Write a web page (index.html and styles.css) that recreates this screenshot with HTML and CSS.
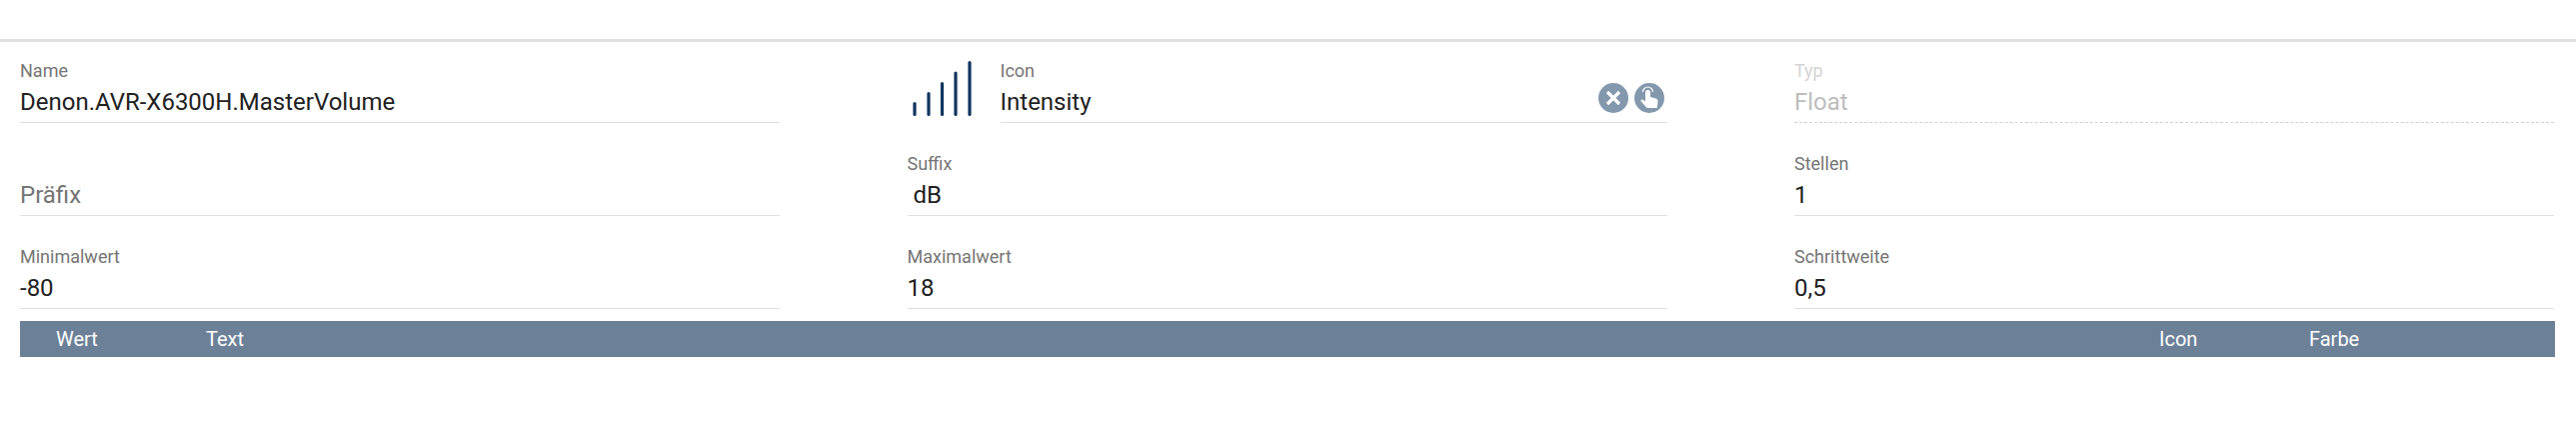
FILE: index.html
```html
<!DOCTYPE html>
<html lang="en">
<head>
<meta charset="UTF-8">
<meta name="viewport" content="width=device-width, initial-scale=1.0">
<title>Variable</title>
<link rel="stylesheet" href="styles.css">
</head>
<body>

<div class="toolbar"></div>

<div class="form">
  <div class="field">
    <label>Name</label>
    <div class="value">Denon.AVR-X6300H.MasterVolume</div>
  </div>

  <div class="field-icon">
    <svg class="preview" width="93" height="60" viewBox="0 0 93 60">
      <g stroke="#12355f" stroke-width="3.2" stroke-linecap="round">
        <line x1="7" y1="43.500" x2="7" y2="54.500"/>
        <line x1="21" y1="33.500" x2="21" y2="54.500"/>
        <line x1="34.500" y1="23.500" x2="34.500" y2="54.500"/>
        <line x1="48" y1="13" x2="48" y2="54.500"/>
        <line x1="62" y1="2.500" x2="62" y2="54.500"/>
      </g>
    </svg>
    <div class="field">
      <label>Icon</label>
      <div class="value">Intensity</div>
      <div class="actions">
        <svg width="30" height="30" viewBox="0 0 30 30">
          <circle cx="15" cy="15" r="15" fill="#8398ad"/>
          <path d="M9 9l12 12M21 9L9 21" stroke="#fff" stroke-width="3.2" fill="none"/>
        </svg>
        <svg width="30" height="30" viewBox="0 0 30 30">
          <circle cx="15" cy="15" r="15" fill="#8398ad"/>
          <path d="M8.500 9a5 5 0 0 1 10 0" stroke="#fff" stroke-width="1.200" fill="none"/>
          <path d="M11 9.500a2.500 2.500 0 0 1 5 0v4.500l5.500 1.500c1.500.4 2.200 1.600 2 3l-.8 6.500h-10l-6-6.500c-.9-1.300.7-2.700 2-1.700l2.300 1.700z" fill="#fff"/>
        </svg>
      </div>
    </div>
  </div>

  <div class="field disabled">
    <label>Typ</label>
    <div class="value">Float</div>
  </div>

  <div class="field">
    <div class="value placeholder">Präfix</div>
  </div>
  <div class="field">
    <label>Suffix</label>
    <div class="value">&nbsp;dB</div>
  </div>
  <div class="field">
    <label>Stellen</label>
    <div class="value">1</div>
  </div>

  <div class="field">
    <label>Minimalwert</label>
    <div class="value">-80</div>
  </div>
  <div class="field">
    <label>Maximalwert</label>
    <div class="value">18</div>
  </div>
  <div class="field">
    <label>Schrittweite</label>
    <div class="value">0,5</div>
  </div>
</div>

<div class="table-head">
  <div class="col-wert">Wert</div>
  <div class="col-text">Text</div>
  <div class="col-icon">Icon</div>
  <div class="col-farbe">Farbe</div>
</div>

</body>
</html>
```

FILE: styles.css
```css
body {
  font-family: Roboto, Arial, sans-serif;
  margin: 0;
  padding: 0;
  background-color: #fff;
  color: #212121;
}
.toolbar {
  height: 39px;
  border-bottom: 3px solid #e0e0e0;
}
.form {
  display: grid;
  grid-template-columns: repeat(3, 760px);
  column-gap: 127.5px;
  padding: 18px 0 0 20px;
}
.field {
  position: relative;
  height: 62px;
  margin-bottom: 30px;
  border-bottom: 1px solid #e0e0e0;
}
.field label {
  display: block;
  height: 24px;
  line-height: 22px;
  font-size: 18px;
  color: #757575;
}
.value {
  font-size: 24px;
  line-height: 36px;
}
.placeholder {
  padding-top: 24px;
  color: #757575;
}
.field-icon {
  display: flex;
  align-items: flex-start;
}
.field-icon .field {
  flex: 1;
}
.preview {
  flex: none;
}
.actions {
  position: absolute;
  right: 3px;
  top: 23px;
  display: flex;
  gap: 6px;
}
.disabled label {
  color: #d4d4d4;
}
.disabled .value {
  color: #bdbdbd;
}
.disabled {
  border-bottom: 1px dashed #d0d0d0;
}
.table-head {
  display: flex;
  width: 2536px;
  height: 36px;
  margin: -18px 0 0 20px;
  background-color: #6c8198;
  color: #fff;
  font-size: 20px;
  line-height: 36px;
}
.col-wert {
  width: 186px;
  padding-left: 36px;
  box-sizing: border-box;
}
.col-text {
  width: 1954px;
}
.col-icon {
  width: 150px;
}
```
